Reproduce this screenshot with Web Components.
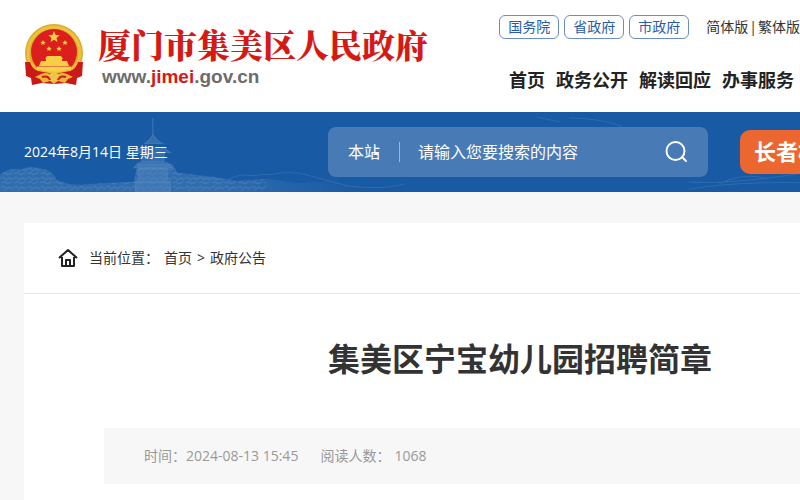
<!DOCTYPE html>
<html lang="zh-CN">
<head>
<meta charset="utf-8">
<title>集美区宁宝幼儿园招聘简章</title>
<style>
body{margin:0;background:#f7f7f7;color:#333;font:14px/20px "Open Sans","Noto Sans CJK SC",sans-serif;overflow:hidden}
</style>
</head>
<body>
<gov-page></gov-page>
<script>
const define=(name,css,html)=>customElements.define(name,class extends HTMLElement{
  constructor(){super();this.attachShadow({mode:'open'}).innerHTML=`<style>*{box-sizing:border-box}${css}</style>${html}`;}
});

define('state-emblem',`:host{display:block;width:60px;height:64px}svg{display:block;width:100%;height:100%}`,`
<svg viewBox="0 0 60 64" aria-hidden="true">
<circle cx="30" cy="30" r="29" fill="#d9ac2c"/><circle cx="30" cy="30" r="26" fill="none" stroke="#ecc13c" stroke-width="3"/>
<circle cx="30" cy="29" r="23" fill="#dc1f1c"/>
<g fill="#f6cf45"><path d="M30 8l1.600 3.900 4.100.3-3.200 2.700 1 4.100-3.500-2.200-3.500 2.200 1-4.100-3.200-2.700 4.100-.3z"/>
<path d="M19 17l.8 1.700 1.900.2-1.400 1.300.4 1.800-1.700-.9-1.700.9.4-1.800-1.400-1.300 1.900-.2zM41 17l.8 1.700 1.900.2-1.400 1.300.4 1.800-1.700-.9-1.700.9.4-1.800-1.400-1.300 1.900-.2zM25 23l.8 1.700 1.900.2-1.400 1.300.4 1.800-1.700-.9-1.700.9.4-1.800-1.400-1.300 1.900-.2zM35 23l.8 1.700 1.900.2-1.400 1.300.4 1.800-1.700-.9-1.700.9.4-1.800-1.400-1.300 1.900-.2z"/>
<path d="M23 33h14l2 3H21zM22 36h16v2H22zM17 38h26l2 5H15zM11 44h38v5H11z"/></g>
<path d="M8 40q8 9 22 9t22-9l-3 12H11z" fill="#edb936"/>
<path d="M13 45h34" stroke="#f6d350" stroke-width="3"/>
<path d="M1 39h5q2 7 8 9l16 3 16-3q6-2 8-9h5l-1 14-5 2-1 7-10-2-12 1-12-1-10 2-1-7-5-2z" fill="#cb1917"/>
<path d="M17 51q7-3 13 3 6-6 13-3l6 3-5 2-3 4-7-2-4 3-4-3-7 2-3-4-5-2z" fill="#e9b739"/>
<circle cx="30" cy="54" r="5" fill="#f0c348"/><path d="M18 54q6-2 8 3M42 54q-6-2-8 3" fill="none" stroke="#d21b19" stroke-width="2"/>
</svg>`);

define('site-brand',`:host{display:flex;gap:14px;align-items:flex-start}
h1{margin:0;font:900 33px/46px "Noto Serif CJK SC","Noto Sans CJK SC",serif;color:#d51a16;white-space:nowrap}
a{display:block;margin-left:4px;font:700 19px/20px "Liberation Sans",sans-serif;color:#6c6c6c;text-decoration:none}b{color:#d51a16}
state-emblem{margin-top:2px}div{min-width:0}`,`<state-emblem></state-emblem><div><h1>厦门市集美区人民政府</h1><a href="#">www.<b>jimei</b>.gov.cn</a></div>`);

define('site-links',`:host{display:flex;flex-direction:column;gap:25px;align-items:flex-end;white-space:nowrap}
div{display:flex;align-items:center}a{color:inherit;text-decoration:none}
.pill{border:1px solid #6b8fc4;border-radius:6px;height:24px;line-height:22px;padding:0 8px;margin-right:5px;color:#285ba5}
.lang{margin-left:12px;display:flex;gap:1px}
nav{display:flex;gap:11px;padding-right:6px;font-weight:700;font-size:18px;line-height:32px;color:#222}`,`
<div><a class="pill" href="#">国务院</a><a class="pill" href="#">省政府</a><a class="pill" href="#">市政府</a><span class="lang"><a href="#">简体版</a><span>|</span><a href="#">繁体版</a></span></div>
<nav><a href="#">首页</a><a href="#">政务公开</a><a href="#">解读回应</a><a href="#">办事服务</a></nav>`);

define('search-box',`:host{display:block;flex:1;min-width:0}
form{display:flex;align-items:center;height:50px;background:#487bb5;border-radius:8px;padding:0 20px;color:#fff}
select,input,button{appearance:none;border:0;background:none;color:inherit;font:inherit;font-size:16px;padding:0;margin:0;min-width:0;outline:0}
.scope{position:relative;display:flex}select{width:32px}
.scope svg{position:absolute;right:0;top:8px}
i{width:1px;height:20px;background:#9bb8d9;margin:0 18px 0 19px}
input{flex:1}input::placeholder{color:#fff;opacity:1}
button{width:24px;height:24px}button svg{display:block}`,`
<form onsubmit="return false"><span class="scope"><select aria-label="搜索范围"><option>本站</option></select><svg width="7" height="10" aria-hidden="true"><path d="M0 5l3-3 3 3z" fill="#fff"/></svg></span><i></i>
<input type="text" aria-label="搜索" placeholder="请输入您要搜索的内容">
<button aria-label="搜索按钮"><svg width="24" height="24" fill="none" stroke="#fff" stroke-width="2" stroke-linecap="round"><circle cx="11.500" cy="11" r="9"/><path d="M18 17l4 4"/></svg></button></form>`);

define('search-banner',`:host{display:flex;align-items:center;height:80px;position:relative;overflow:hidden;background:#185aa3;color:#fff;padding-left:24px}
.scene{position:absolute;inset:0;width:100%;height:100%}
time{position:relative;width:304px;flex:none}
search-box{position:relative}
button{position:relative;flex:none;width:60px;height:44px;margin-left:32px;border:0;border-radius:10px 0 0 10px;background:#ec6630;color:#fff;padding:0 0 4px 14px;overflow:hidden;white-space:nowrap;text-align:left;font:700 22px/40px "Noto Sans CJK SC",sans-serif}`,`
<svg class="scene" viewBox="0 0 800 79" preserveAspectRatio="xMinYMax slice" aria-hidden="true">
<defs><pattern id="t" width="13" height="9" patternUnits="userSpaceOnUse"><path d="M0 3l3-2 3 3 3-2 4 2M1 7l4-1 2 2 5-2" fill="none" stroke="#699aca" stroke-width="1"/></pattern>
<linearGradient id="f"><stop offset=".6" stop-color="#306cae"/><stop offset="1" stop-color="#306cae" stop-opacity="0"/></linearGradient></defs>
<path d="M0 62q10-8 20-5 10-5 20-1 12 1 16 11 15 7 32 4l44-2 4-18h34l5 9 35 4 23 4 30-2 30 4 30-1 37 5v5H0z" fill="url(#f)"/>
<path d="M0 62q10-8 20-5 10-5 20-1 12 1 16 11 15 7 32 4l44-2 4-18h34l5 9 35 4 23 4 30-2v12H0z" fill="url(#t)" opacity=".4"/>
<path d="M151 6v16q-2 5-8 9h17q-7-4-9-9M139 35q-3 4-6 5h36q-4-1-6-5zM140 41h22v8h-22zM137 50l-5 5h38l-5-5zM137 56h28v13h-28zM134 69h34v10h-34z" fill="#4f83bd" stroke="#6795c8" stroke-width="1" opacity=".5"/>
<g fill="none" stroke="#4a80bb" opacity=".45"><path d="M225 67q12-7 25-4 10-2 17-1 20-5 39 1l38 10q32 4 56-2M530 5l24 5M562 6q28 0 52 8M680 69q43 3 120-10M680 76q50-8 120-6M710 71q24-12 48-5"/></g>
</svg><time datetime="2024-08-14">2024年8月14日 星期三</time><search-box></search-box><button>长者模式</button>`);

define('crumb-trail',`:host{display:flex;align-items:center;height:71px;padding-left:34px;border-bottom:1px solid #e6e6e6;color:#333}
svg{margin-right:11px}nav{display:flex;gap:5px}a{color:inherit;text-decoration:none}`,`
<svg width="20" height="20" viewBox="0 0 20 20" fill="none" stroke="#222" stroke-width="2" stroke-linejoin="round" aria-hidden="true"><path d="M1 10l9-8 9 8M4 9v9h12V9M8 18v-6h4v6"/></svg>
<nav aria-label="当前位置"><span>当前位置：</span><a href="#">首页</a><span>&gt;</span><a href="#">政府公告</a></nav>`);

define('notice-article',`:host{display:block;background:#fff;margin:31px 0 0 24px;padding-bottom:16px}
h2{margin:0;padding:39px 0 47px 304px;font:700 32px/48px "Noto Sans CJK SC",sans-serif;color:#333;white-space:nowrap}
.meta{display:flex;gap:22px;margin-left:80px;background:#f7f7f7;color:#999;line-height:20px;padding:18px 40px}
.meta span span{margin-left:4px}`,`<crumb-trail></crumb-trail><h2>集美区宁宝幼儿园招聘简章</h2>
<div class="meta"><span>时间：2024-08-13 15:45</span><span>阅读人数：<span>1068</span></span></div>`);

define('gov-page',`:host{display:block}
header{display:flex;justify-content:space-between;background:#fff;min-height:112px;padding-left:24px}
site-brand{padding-top:21px}site-links{padding-top:15px}`,`
<header><site-brand></site-brand><site-links></site-links></header><search-banner></search-banner><notice-article></notice-article>`);
</script>
</body>
</html>
